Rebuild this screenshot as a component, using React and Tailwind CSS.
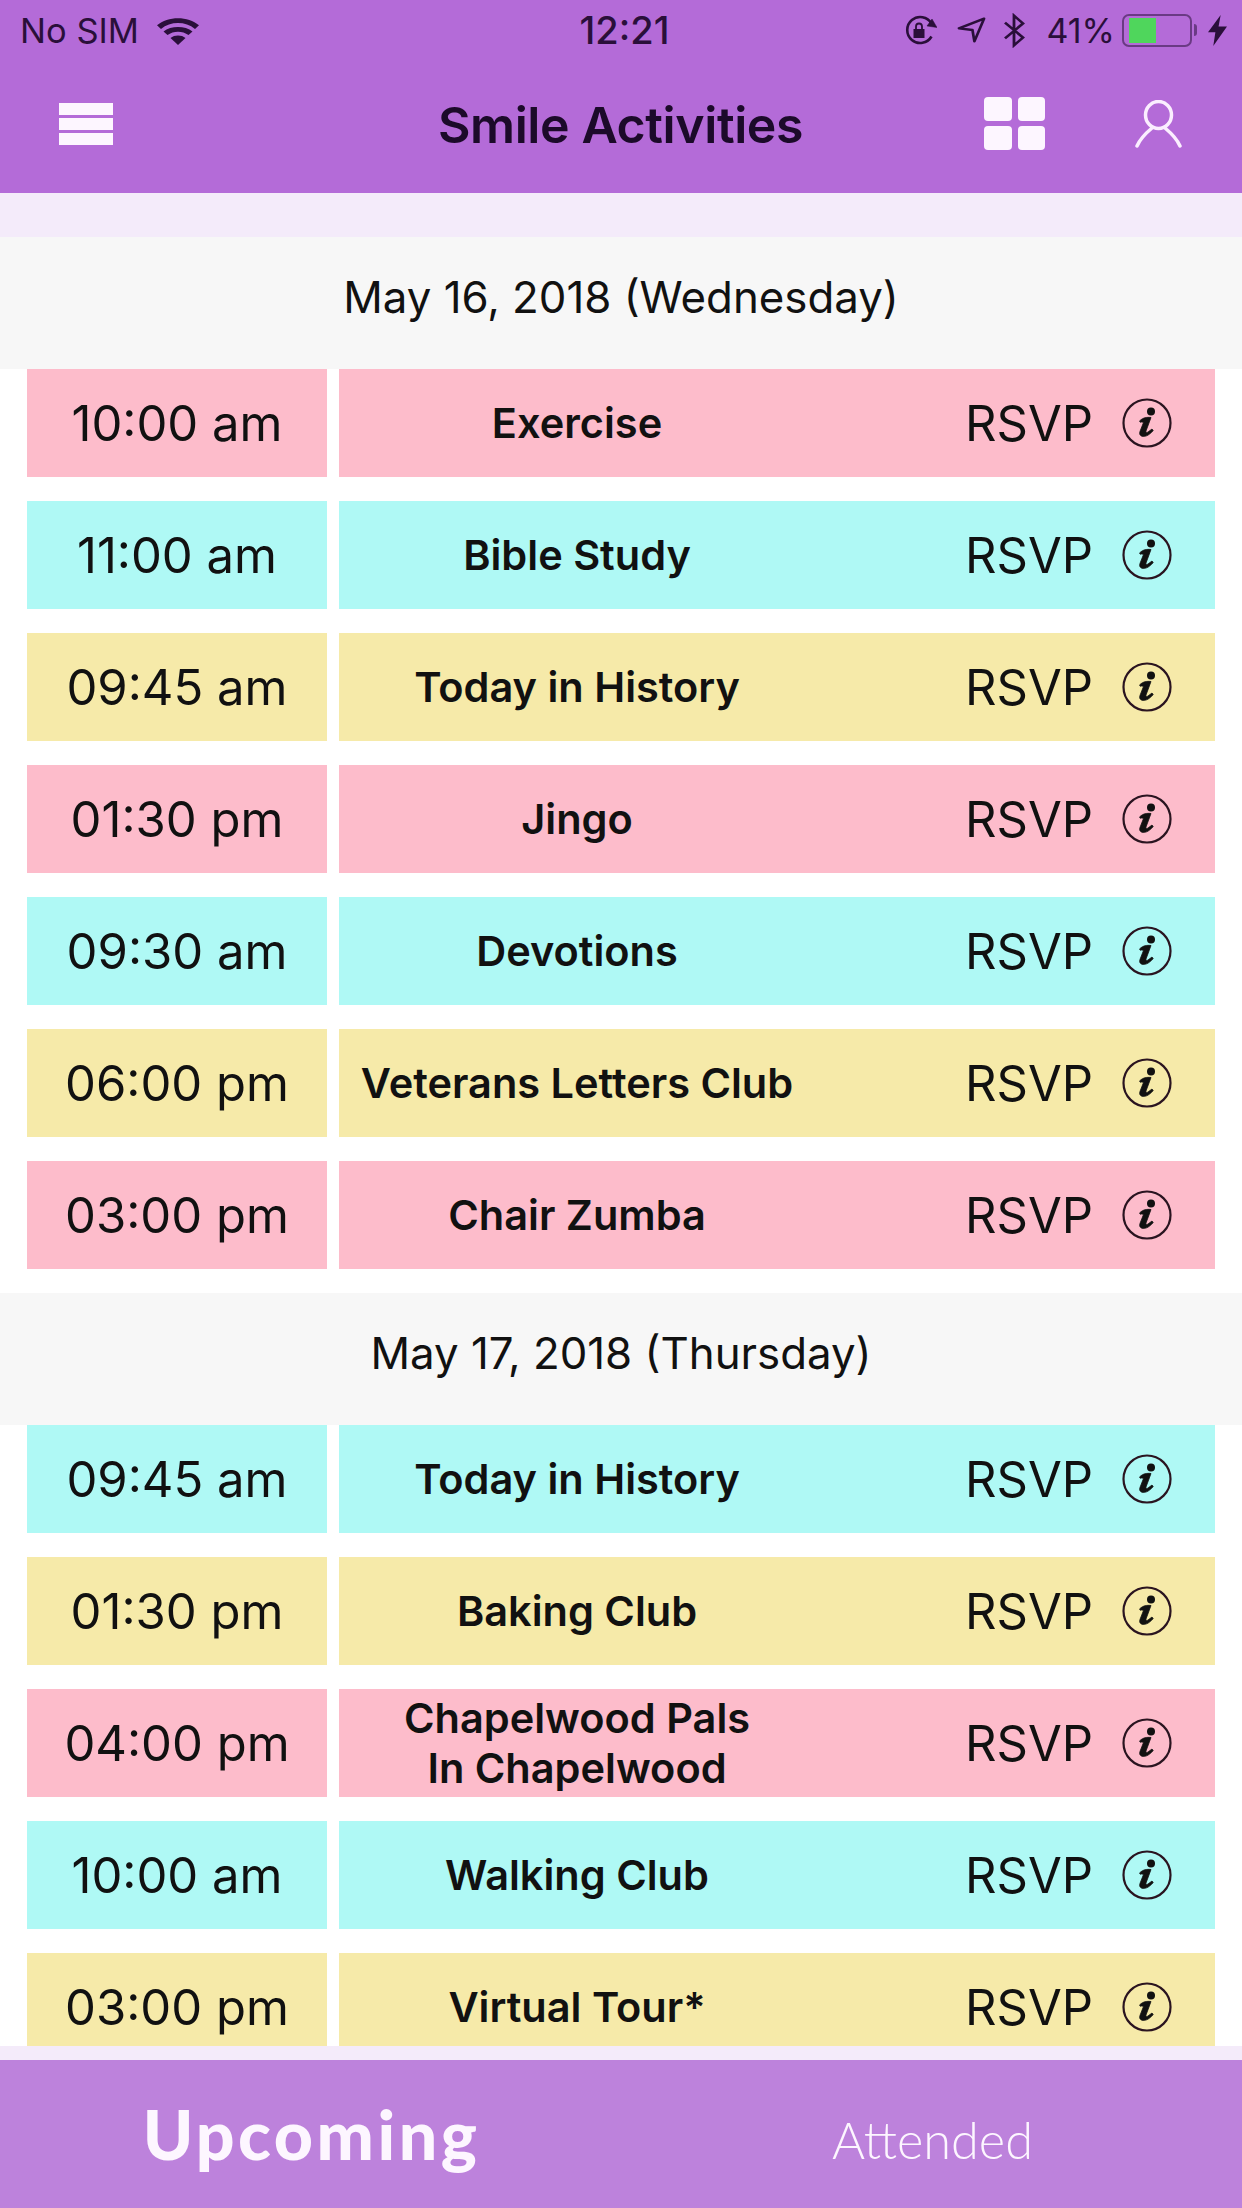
const DAY_ONE = [
    { time: "10:00 am", title: "Exercise", color: "pink" },
    { time: "11:00 am", title: "Bible Study", color: "cyan" },
    { time: "09:45 am", title: "Today in History", color: "yellow" },
    { time: "01:30 pm", title: "Jingo", color: "pink" },
    { time: "09:30 am", title: "Devotions", color: "cyan" },
    { time: "06:00 pm", title: "Veterans Letters Club", color: "yellow" },
    { time: "03:00 pm", title: "Chair Zumba", color: "pink" },
];

const DAY_TWO = [
    { time: "09:45 am", title: "Today in History", color: "cyan" },
    { time: "01:30 pm", title: "Baking Club", color: "yellow" },
    { time: "04:00 pm", title: "Chapelwood Pals\nIn Chapelwood", color: "pink" },
    { time: "10:00 am", title: "Walking Club", color: "cyan" },
    { time: "03:00 pm", title: "Virtual Tour*", color: "yellow" },
];

const COLORS = {
    pink: "bg-[#fdbccb]",
    cyan: "bg-[#aff9f5]",
    yellow: "bg-[#f6eaa9]",
};

function InfoIcon() {
    return (
        <svg width="50" height="50" viewBox="0 0 50 50" fill="none" className="shrink-0">
            <circle cx="25" cy="25" r="23.5" stroke="#2a1420" strokeWidth="2.2" />
            <circle cx="29" cy="13.5" r="4" fill="#111" />
            <path d="M17.5 23 C21 19.5 25 19 29 19.5 L24 33 C23.6 34.6 24.6 35 26 34 L30 31 L31.2 32.6 C27.5 36.8 24.5 38.4 21.5 38.4 C18.2 38.4 17 36 18 33.4 L21.4 24.8 C20.8 23.8 19.6 23.6 18.6 24.4 Z" fill="#111" stroke="#111" strokeWidth="0.8" />
        </svg>
    );
}

function Row({ item }) {
    const bg = COLORS[item.color];
    return (
        <div className="flex h-[108px] gap-3 pl-[27px] pr-[27px]">
            <div className={`${bg} flex w-[300px] shrink-0 items-center justify-center pt-[2px] text-[49px] text-[#111]`}>
                {item.time}
            </div>
            <div className={`${bg} flex flex-1 items-center`}>
                <div className="w-[476px] whitespace-pre-line text-center text-[41.5px] leading-[50px] font-semibold text-[#111]">
                    {item.title}
                </div>
                <div className="ml-[150px] w-[125px] pt-[2px] text-[49px] text-[#111]">RSVP</div>
                <div className="ml-[32px]"><InfoIcon /></div>
            </div>
        </div>
    );
}

function DateBand({ children }) {
    return (
        <div className="flex h-[132px] shrink-0 items-center justify-center bg-[#f7f7f7] pb-[10px] text-[43.8px] text-[#111]">
            {children}
        </div>
    );
}

function StatusBar() {
    return (
        <div className="flex h-[60px] items-center pl-[20px] pr-[15px] text-[#2a0f3a]">
            <div className="flex flex-1 items-center gap-[18px] pt-[1px] text-[34.5px]">
                <span>No SIM</span>
                <svg width="42" height="28" viewBox="0 0 42 34" preserveAspectRatio="none" fill="#2a0f3a">
                    <path d="M21 34 L13.5 25.5 C17.5 21.5 24.5 21.5 28.5 25.5 Z" />
                    <path d="M10.5 22 L6.5 17.5 C14 10.5 28 10.5 35.5 17.5 L31.5 22 C25.5 16.5 16.5 16.5 10.5 22 Z" />
                    <path d="M4 14.5 L0 10 C11 -1.5 31 -1.5 42 10 L38 14.5 C28.5 5 13.5 5 4 14.5 Z" />
                </svg>
            </div>
            <div className="pl-[2px] text-[38px] font-medium">12:21</div>
            <div className="flex flex-1 items-center justify-end text-[34px]">
                <svg width="34" height="30" viewBox="0 0 34 30" fill="none" stroke="#2a0f3a" strokeWidth="2.6" className="mr-[20px]">
                    <path d="M28.5 21.5 A13 13 0 1 1 28.5 8.5" />
                    <path d="M24 11 L34 12.5 L29 4 Z" fill="#2a0f3a" strokeWidth="0.5" />
                    <rect x="10.5" y="14" width="11" height="9" fill="#2a0f3a" stroke="none" />
                    <path d="M13 14 V11.5 A3 3 0 0 1 19 11.5 V14" strokeWidth="1.8" />
                </svg>
                <svg width="29" height="26" viewBox="0 0 30 32" preserveAspectRatio="none" fill="none" stroke="#2a0f3a" strokeWidth="2.8" className="mr-[17px]">
                    <path d="M28 2 L2 14 L16 16 L18 30 Z" strokeLinejoin="round" />
                </svg>
                <svg width="22" height="35" viewBox="0 0 22 40" preserveAspectRatio="none" fill="none" stroke="#2a0f3a" strokeWidth="2.8" className="mr-[21px]">
                    <path d="M2 11 L20 28 L11 37 V3 L20 12 L2 29" />
                </svg>
                <span className="mr-[7px]">41%</span>
                <div className="mr-[2px] h-[33px] w-[70px] rounded-[7px] border-2 border-[#6a3a84] px-[5px] py-[2px]">
                    <div className="h-full w-[27px] bg-[#4fd65c]" />
                </div>
                <div className="mr-[11px] h-[12px] w-[3px] rounded-r-full bg-[#6a3a84]" />
                <svg width="19" height="31" viewBox="0 0 18 38" preserveAspectRatio="none" fill="#2a0f3a">
                    <path d="M12 0 L0 21 H7 L5 38 L18 14 H10 Z" />
                </svg>
            </div>
        </div>
    );
}

function NavBar() {
    return (
        <div className="flex flex-1 items-center pb-[6px]">
            <div className="flex flex-1 pl-[59px]">
                <div className="flex w-[54px] flex-col gap-[3px]">
                    <div className="h-[12px] bg-[#fdf6ff]" />
                    <div className="h-[12px] bg-[#fdf6ff]" />
                    <div className="h-[12px] bg-[#fdf6ff]" />
                </div>
            </div>
            <div className="pt-[3px] text-[50px] font-semibold tracking-[-0.4px] text-[#1c0a2a]">Smile Activities</div>
            <div className="flex flex-1 items-center justify-end pr-[60px]">
                <div className="mr-[90px] grid w-[61px] grid-cols-2 gap-x-[6px] gap-y-[5px]">
                    <div className="h-[24px] rounded-[4px] bg-[#fdf6ff]" />
                    <div className="h-[24px] rounded-[4px] bg-[#fdf6ff]" />
                    <div className="h-[24px] rounded-[4px] bg-[#fdf6ff]" />
                    <div className="h-[24px] rounded-[4px] bg-[#fdf6ff]" />
                </div>
                <svg width="47" height="48" viewBox="0 0 47 48" fill="none" stroke="#fbeeff" strokeWidth="3.5" strokeLinecap="round">
                    <ellipse cx="23.5" cy="15" rx="13" ry="13.5" />
                    <path d="M17 28 C11 33 5 39 2 46" />
                    <path d="M30 28 C36 33 42 39 45 46" />
                </svg>
            </div>
        </div>
    );
}

export default function App() {
    return (
        <div className="flex h-[2208px] w-[1242px] flex-col overflow-hidden bg-white font-['Inter',sans-serif]">
            <div className="flex h-[193px] shrink-0 flex-col bg-[#b46bd8]">
                <StatusBar />
                <NavBar />
            </div>
            <div className="h-[44px] shrink-0 bg-[#f4ebfa]" />
            <div className="flex h-[1809px] shrink-0 flex-col overflow-hidden">
                <DateBand>May 16, 2018 (Wednesday)</DateBand>
                <div className="flex flex-col gap-6">
                    {DAY_ONE.map((item) => <Row key={item.time + item.title} item={item} />)}
                </div>
                <div className="h-6 shrink-0" />
                <DateBand>May 17, 2018 (Thursday)</DateBand>
                <div className="flex flex-col gap-6">
                    {DAY_TWO.map((item) => <Row key={item.time + item.title} item={item} />)}
                </div>
            </div>
            <div className="h-[14px] shrink-0 bg-[#f4ebfa]" />
            <div className="flex flex-1 items-center bg-[#bd82dc] font-['Lato',sans-serif] text-[#fdf6ff]">
                <div className="w-[623px] text-center text-[68px] font-black tracking-[3.5px]">Upcoming</div>
                <div className="w-[619px] pt-[12px] text-center text-[50.5px] font-light">Attended</div>
            </div>
        </div>
    );
}
